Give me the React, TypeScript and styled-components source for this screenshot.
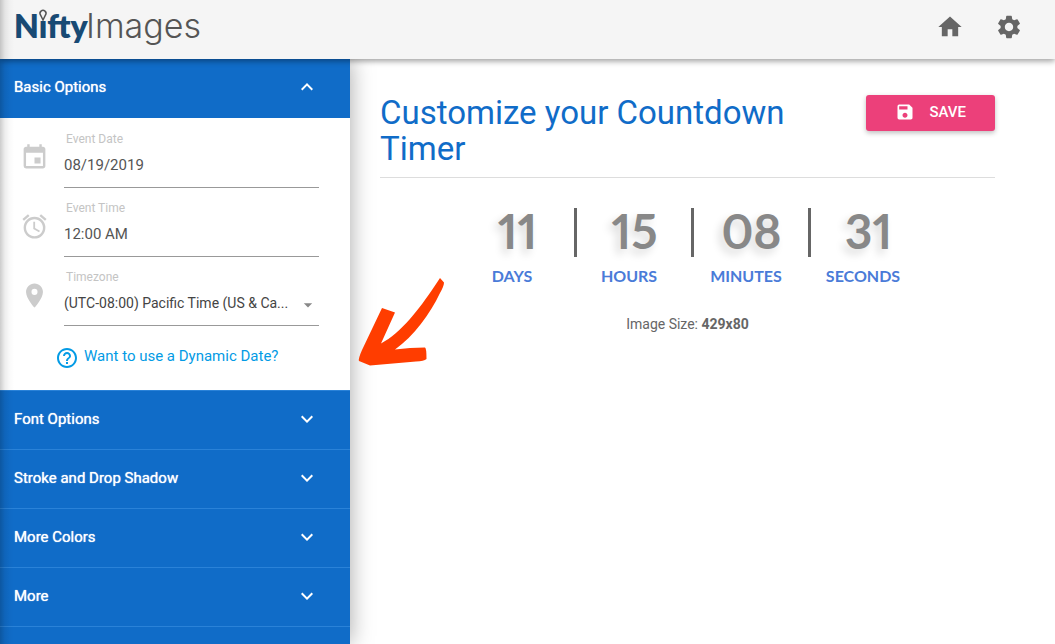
import React from "react";
import styled, { createGlobalStyle } from "styled-components";
import {
  MdHome,
  MdSettings,
  MdSave,
  MdEvent,
  MdAlarm,
  MdPlace,
  MdHelpOutline,
  MdExpandMore,
  MdExpandLess,
  MdArrowDropDown,
} from "react-icons/md";

const GlobalStyle = createGlobalStyle`
  *, *::before, *::after { box-sizing: border-box; }
  body {
    margin: 0;
    background: #fff;
    color: #555;
    font-family: Roboto, "Liberation Sans", sans-serif;
    font-size: 15px;
  }
  button, input, select { font: inherit; }
`;

const Page = styled.div`
  position: relative;
  display: flex;
  flex-direction: column;
  height: 100vh;
  overflow: hidden;

  &::after {
    content: "";
    position: absolute;
    inset: 0 auto 0 0;
    width: 14px;
    z-index: 4;
    pointer-events: none;
    background: linear-gradient(
      to right,
      rgba(0, 0, 0, 0.2),
      rgba(0, 0, 0, 0.07) 35%,
      rgba(0, 0, 0, 0.02) 70%,
      transparent
    );
  }
`;

const Header = styled.header`
  flex: none;
  display: flex;
  align-items: center;
  justify-content: space-between;
  height: 59px;
  padding: 0 32px 6px 12px;
  background: #f5f5f5;
  box-shadow: 0 2px 6px rgba(0, 0, 0, 0.4);
  z-index: 3;
`;

const Logo = styled.a`
  display: block;
  text-decoration: none;
  line-height: 0;
`;

const HeaderNav = styled.nav`
  display: flex;
  gap: 31px;
`;

const IconLink = styled.a`
  display: flex;
  color: #666;
`;

const Body = styled.div`
  flex: 1;
  display: flex;
  min-height: 0;
`;

const Sidebar = styled.aside`
  flex: none;
  width: 350px;
  background: #106cc8;
  box-shadow: 0 0 22px rgba(0, 0, 0, 0.35);
  z-index: 2;
`;

const SectionButton = styled.button<{ $first?: boolean }>`
  display: flex;
  align-items: center;
  justify-content: space-between;
  width: 100%;
  height: 59px;
  padding: 0 31px ${(p) => (p.$first ? 4 : 2)}px 14px;
  border: 0;
  border-top: 1px solid ${(p) => (p.$first ? "#106cc8" : "#2a82d8")};
  background: #106cc8;
  color: #fff;
  text-shadow: 0 0 1px #fff;
  text-align: left;
  cursor: pointer;
`;

const Form = styled.form`
  height: 272px;
  padding: 1px 31px 0 20px;
  background: #fff;
`;

const Field = styled.div`
  display: flex;
  gap: 15px;
  height: 69px;
  padding-top: 12px;
`;

const FieldIcon = styled.span`
  display: flex;
  padding-top: 12px;
  color: #ccc;
`;

const FieldBody = styled.div`
  position: relative;
  flex: 1;
  min-width: 0;
  display: flex;
  flex-direction: column;
`;

const FieldLabel = styled.label`
  padding-left: 2px;
  color: #c4c4c4;
  font-size: 12px;
  line-height: 16px;
`;

const control = `
  width: 100%;
  height: 41px;
  padding: 0 0 5px;
  border: 0;
  border-bottom: 1px solid #999;
  border-radius: 0;
  outline: 0;
  background: transparent;
`;

const TextInput = styled.input`
  ${control}
  color: #555;
`;

const Select = styled.select`
  ${control}
  appearance: none;
  padding-right: 20px;
  color: #444;
  font-size: 14px;
  text-overflow: ellipsis;
  white-space: nowrap;
  overflow: hidden;
`;

const SelectArrow = styled(MdArrowDropDown)`
  position: absolute;
  right: 1px;
  bottom: 11px;
  color: #888;
  pointer-events: none;
`;

const HelpLink = styled.a`
  display: flex;
  align-items: center;
  gap: 5px;
  margin: 18px 0 0 35px;
  color: #039be5;
  text-decoration: none;
  line-height: 24px;
`;

const HelpText = styled.span`
  padding-bottom: 4px;
`;

const Main = styled.main`
  flex: 1;
  min-width: 0;
  padding: 36px 60px 0 30px;
`;

const TitleBar = styled.div`
  display: flex;
  align-items: flex-start;
  justify-content: space-between;
  gap: 24px;
  padding-bottom: 10px;
  border-bottom: 1px solid #ddd;
`;

const Title = styled.h1`
  margin: 0;
  color: #106cc8;
  font-size: 33px;
  font-weight: 400;
  line-height: 36px;
`;

const SaveButton = styled.button`
  flex: none;
  display: flex;
  align-items: center;
  gap: 14px;
  height: 36px;
  padding: 0 29px 2px;
  border: 0;
  border-radius: 3px;
  background: #ec407a;
  color: #fff;
  font-weight: 500;
  box-shadow: 0 2px 5px rgba(0, 0, 0, 0.26);
  cursor: pointer;
`;

const Preview = styled.section`
  display: flex;
  flex-direction: column;
  align-items: center;
  padding-top: 29px;
`;

const Timer = styled.div`
  display: flex;
  height: 80px;
  font-family: Lato, sans-serif;
  font-weight: 700;
`;

const Unit = styled.div`
  width: 76px;
  text-align: center;
`;

const Digits = styled.div`
  padding-left: 11px;
  color: #888;
  font-size: 48px;
  font-variant-numeric: proportional-nums;
  line-height: 48px;
  text-shadow: -4px 5px 8px rgba(0, 0, 0, 0.15);
`;

const UnitName = styled.div`
  padding-top: 11px;
  color: #4a7bd8;
  font-size: 16px;
  line-height: 20px;
`;

const Separator = styled.span`
  width: 3px;
  height: 49px;
  margin: 1px 14px 0 24px;
  background: #666;
`;

const ImageSize = styled.p`
  margin: 27px 0 0;
  color: #666;
  font-size: 14px;
  line-height: 20px;
`;

const Pointer = styled.svg`
  position: absolute;
  left: 358px;
  top: 278px;
  z-index: 5;
`;

const units = [
  ["11", "DAYS"],
  ["15", "HOURS"],
  ["08", "MINUTES"],
  ["31", "SECONDS"],
];

const sections = ["Font Options", "Stroke and Drop Shadow", "More Colors", "More"];

export default function App() {
  return (
    <>
      <GlobalStyle />
      <Page>
        <Header>
          <Logo href="#" aria-label="NiftyImages">
            <svg width="200" height="46" viewBox="0 0 200 46">
              <text x="2" y="34" fontFamily="Lato, sans-serif" fontWeight="800" fontSize="32" fill="#184a74">
                N&#305;fty
              </text>
              <text x="74" y="34" fontFamily="Inter, sans-serif" fontWeight="300" fontSize="34" fill="#555">
                Images
              </text>
              <path
                d="M31 16L28.500 11A3 3 0 1 1 33.500 11Z"
                fill="#f5f5f5"
                stroke="#555"
                strokeWidth="1.500"
              />
            </svg>
          </Logo>
          <HeaderNav>
            <IconLink href="#" aria-label="Home"><MdHome size={28} /></IconLink>
            <IconLink href="#" aria-label="Settings"><MdSettings size={28} /></IconLink>
          </HeaderNav>
        </Header>
        <Body>
          <Sidebar>
            <SectionButton $first aria-expanded="true">
              Basic Options
              <MdExpandLess size={24} />
            </SectionButton>
            <Form>
              <Field>
                <FieldIcon><MdEvent size={29} /></FieldIcon>
                <FieldBody>
                  <FieldLabel htmlFor="date">Event Date</FieldLabel>
                  <TextInput id="date" defaultValue="08/19/2019" />
                </FieldBody>
              </Field>
              <Field>
                <FieldIcon><MdAlarm size={29} /></FieldIcon>
                <FieldBody>
                  <FieldLabel htmlFor="time">Event Time</FieldLabel>
                  <TextInput id="time" defaultValue="12:00 AM" />
                </FieldBody>
              </Field>
              <Field>
                <FieldIcon><MdPlace size={29} /></FieldIcon>
                <FieldBody>
                  <FieldLabel htmlFor="zone">Timezone</FieldLabel>
                  <Select id="zone">
                    <option>(UTC-08:00) Pacific Time (US &amp; Ca...</option>
                  </Select>
                  <SelectArrow size={20} />
                </FieldBody>
              </Field>
              <HelpLink href="#">
                <MdHelpOutline size={24} />
                <HelpText>Want to use a Dynamic Date?</HelpText>
              </HelpLink>
            </Form>
            {sections.map((name) => (
              <SectionButton key={name} aria-expanded="false">
                {name}
                <MdExpandMore size={24} />
              </SectionButton>
            ))}
            <SectionButton as="div" />
          </Sidebar>
          <Main>
            <TitleBar>
              <Title>Customize your Countdown Timer</Title>
              <SaveButton>
                <MdSave size={20} />
                SAVE
              </SaveButton>
            </TitleBar>
            <Preview>
              <Timer>
                {units.map(([value, name], i) => (
                  <React.Fragment key={name}>
                    {i > 0 && <Separator />}
                    <Unit>
                      <Digits>{value}</Digits>
                      <UnitName>{name}</UnitName>
                    </Unit>
                  </React.Fragment>
                ))}
              </Timer>
              <ImageSize>
                Image Size: <b>429x80</b>
              </ImageSize>
            </Preview>
          </Main>
        </Body>
        <Pointer width="88" height="90" viewBox="0 0 88 90" aria-hidden="true">
          <path
            d="M82 0L86 4.500Q86 8 82 15C72 36 56 58 37 71.500Q52 69.500 67 69.500Q68.500 70 68.500 81Q66 83 58 83.500L12 87.500L1 83Q0 81 4 72L24 30L37 34.500L23 65.500C43 55 62 30 76 9Z"
            fill="#ff3d00"
          />
        </Pointer>
      </Page>
    </>
  );
}
